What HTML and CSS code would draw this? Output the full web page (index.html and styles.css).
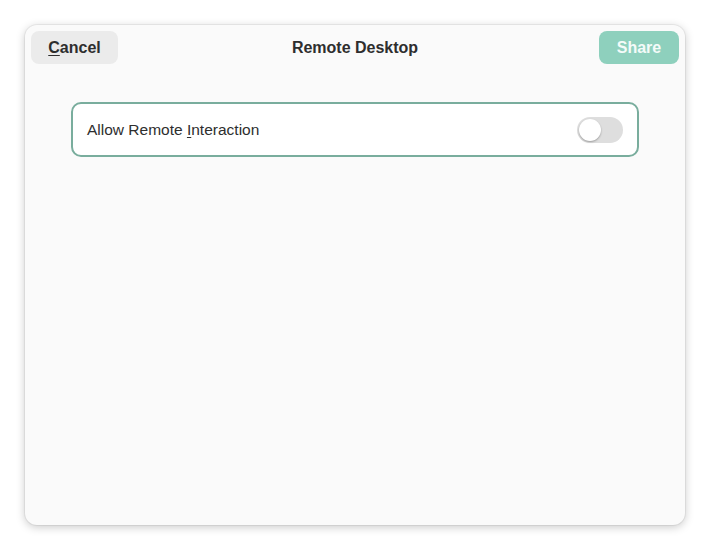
FILE: index.html
```html
<!DOCTYPE html>
<html>
<head>
    <meta charset="UTF-8">
    <title>Remote Desktop</title>
    <link rel="stylesheet" href="styles.css">
</head>
<body>
    <div class="dialog">
        <div class="headerbar">
            <div class="start"><button class="btn btn-cancel"><u>C</u>ancel</button></div>
            <div class="title">Remote Desktop</div>
            <div class="end"><button class="btn btn-share" disabled>Share</button></div>
        </div>
        <div class="content">
            <div class="row">
                <span class="row-label">Allow Remote <u>I</u>nteraction</span>
                <span class="switch"><span class="knob"></span></span>
            </div>
        </div>
    </div>
</body>
</html>
```

FILE: styles.css
```css
body {
    font-family: "Liberation Sans", Arial, sans-serif;
    margin: 0;
    padding: 25px;
    background-color: #ffffff;
    width: 660px;
}

.dialog {
    background: #fafafa;
    height: 500px;
    border-radius: 12px;
    box-shadow: 0 2px 10px rgba(0, 0, 0, 0.22), 0 0 0 1px rgba(0, 0, 0, 0.05);
    overflow: hidden;
}

.headerbar {
    display: grid;
    grid-template-columns: 1fr auto 1fr;
    align-items: center;
    padding: 6px 6px 0 6px;
    height: 33px;
}

.end {
    display: flex;
    justify-content: flex-end;
}

.btn {
    font-family: inherit;
    font-size: 16px;
    font-weight: bold;
    height: 33px;
    border: none;
    border-radius: 8px;
    padding: 0;
}

.btn u {
    text-underline-offset: 2px;
}

.btn-cancel {
    background: #ebebeb;
    color: #2e2e2e;
    width: 87px;
}

.btn-share {
    background: #8ed0bd;
    color: #f4fbf9;
    width: 80px;
}

.title {
    font-size: 16px;
    font-weight: bold;
    color: #2e2e2e;
}

.content {
    padding: 38px 46px 0 46px;
}

.row {
    display: flex;
    align-items: center;
    justify-content: space-between;
    background: #fff;
    border: 2px solid #79ad9d;
    border-radius: 10px;
    height: 51px;
    padding: 0 14px 0 14px;
}

.row-label {
    font-size: 15.5px;
    color: #2e2e2e;
}

.row-label u {
    text-underline-offset: 2px;
}

.switch {
    display: flex;
    align-items: center;
    width: 46px;
    height: 26px;
    border-radius: 13px;
    background: #dedede;
    padding: 0 2px;
    box-sizing: border-box;
}

.knob {
    width: 22px;
    height: 22px;
    border-radius: 50%;
    background: #fff;
    box-shadow: 0 1px 2px rgba(0, 0, 0, 0.3);
}
```
